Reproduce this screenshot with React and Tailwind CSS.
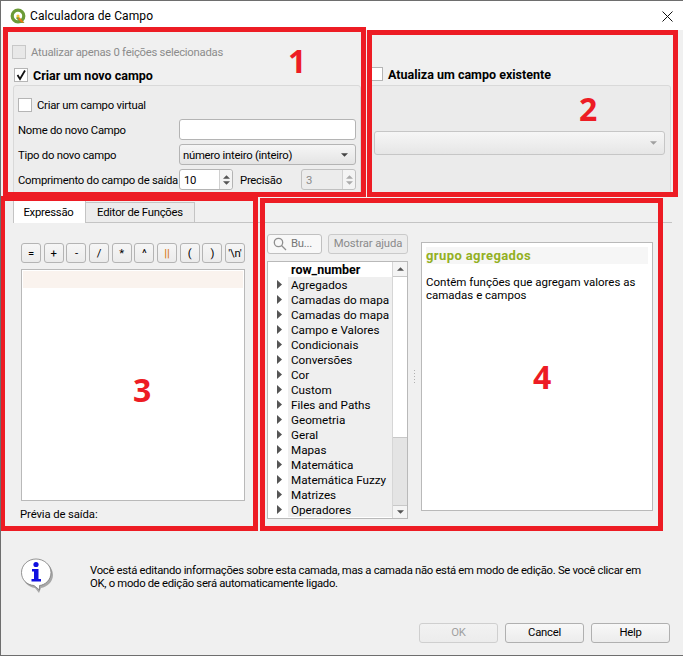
const font = { fontFamily: 'Roboto, sans-serif' };

const operators = ['=', '+', '-', '/', '*', '^', '||', '(', ')', "'\\n'"];
const groups = [
  'Agregados',
  'Camadas do mapa',
  'Camadas do mapa',
  'Campo e Valores',
  'Condicionais',
  'Conversões',
  'Cor',
  'Custom',
  'Files and Paths',
  'Geometria',
  'Geral',
  'Mapas',
  'Matemática',
  'Matemática Fuzzy',
  'Matrizes',
  'Operadores',
];

const Check = ({ checked, disabled, className = '' }) => (
  <div
    className={`w-[14px] h-[14px] shrink-0 border flex items-center justify-center ${
      disabled ? 'border-[#c8c8c8] bg-[#e8e8e8]' : 'border-[#b5b5b5] bg-white'
    } ${className}`}
  >
    {checked && (
      <svg width="12" height="12" viewBox="0 0 12 12">
        <path d="M2.5 6 L5 10 L10 1.5" fill="none" stroke="#111" strokeWidth="1.8" />
      </svg>
    )}
  </div>
);

const Arrow = ({ up, color = '#444', w = 7, h = 4 }) => (
  <svg width={w} height={h} viewBox="0 0 8 4">
    <path d={up ? 'M4 0 L8 4 L0 4 Z' : 'M0 0 L8 0 L4 4 Z'} fill={color} />
  </svg>
);

const Select = ({ children, disabled }) => (
  <div
    className={`flex items-center justify-between rounded-[3px] border border-[#b4b4b4] bg-gradient-to-b pl-[3px] pr-[7px] ${
      disabled ? 'from-[#f6f6f6] to-[#e6e6e6] h-[24px] border-[#c6c6c6]' : 'from-[#f6f6f6] to-[#e4e4e4] h-[21px]'
    }`}
  >
    <span className="pt-[3px]">{children}</span>
    <Arrow color={disabled ? '#a0a0a0' : '#444'} />
  </div>
);

const Spin = ({ value, disabled, className = '' }) => (
  <div
    className={`flex h-[21px] rounded-[3px] border ${
      disabled ? 'border-[#c0c0c0] bg-[#ececec] text-[#8a8a8a]' : 'border-[#b4b4b4] bg-white'
    } ${className}`}
  >
    <span className="flex-1 pl-[4px] leading-[22px]">{value}</span>
    <div className="w-[13px] border-l border-[#d0d0d0] flex flex-col items-center justify-center gap-[2px] bg-[#f4f4f4] rounded-r-[3px]">
      <Arrow up color={disabled ? '#ababab' : '#555'} />
      <Arrow color={disabled ? '#ababab' : '#555'} />
    </div>
  </div>
);

const Btn = ({ children, disabled }) => (
  <button
    className={`w-[79px] h-[20px] rounded-[3px] border bg-gradient-to-b text-center leading-[18px] ${
      disabled
        ? 'border-[#cfcfcf] from-[#f2f2f2] to-[#ececec] text-[#a0a0a0]'
        : 'border-[#b0b0b0] from-[#f8f8f8] to-[#ececec] text-black'
    }`}
  >
    {children}
  </button>
);

const RedBox = ({ className }) => (
  <div className={`absolute border-[5px] border-[#ed1c24] pointer-events-none ${className}`} />
);

const RedNum = ({ children, className }) => (
  <div
    className={`absolute text-[#ed1c24] text-[32px] font-bold leading-none ${className}`}
    style={{ fontFamily: '"Open Sans", sans-serif' }}
  >
    {children}
  </div>
);

const QgisLogo = () => (
  <svg width="17" height="17" viewBox="0 0 17 17">
    <circle cx="8" cy="8" r="5.8" fill="none" stroke="#6b9b37" strokeWidth="3.2" />
    <path d="M8 8 L14.5 15 L10.5 15 L6 10 Z" fill="#6b9b37" />
    <path d="M9.5 9.5 L14 14.5 L11.5 14.5 L8 11 Z" fill="#ee7913" />
    <circle cx="8" cy="8" r="1.6" fill="#f0c330" />
  </svg>
);

const InfoIcon = () => (
  <svg width="33" height="36" viewBox="0 0 33 36">
    <path
      d="M17 3 C25 3 32 9 32 17 C32 24 26 29 20 30 L18 35 L14 30 C7 29 2 24 2 17 C2 9 9 3 17 3 Z"
      fill="#a8a8a8"
    />
    <path
      d="M15 1 C23 1 30 7 30 14.5 C30 22 24 27 18.500 27.500 L18.500 32 L13 27.500 C6 27 0.500 22 0.500 14.500 C0.500 7 7 1 15 1 Z"
      fill="white"
      stroke="#7a7a7a"
      strokeWidth="0.8"
    />
    <circle cx="15" cy="6.500" r="2.600" fill="#1010e0" />
    <path d="M11 11 H17.500 V21 H20 V23.500 H10.500 V21 H13 V13.500 H11 Z" fill="#1010e0" />
  </svg>
);

export default function App() {
  return (
    <div
      className="relative w-[683px] h-[656px] flex flex-col bg-[#f0f0f0] border-t border-l border-b border-[#6e6e6e] text-[11.3px] tracking-[-0.25px] text-black overflow-hidden whitespace-nowrap"
      style={font}
    >
      {/* title bar */}
      <div className="h-[29px] shrink-0 bg-white flex items-center pl-[9px] pr-[10px] pt-px">
        <QgisLogo />
        <span className="ml-[3px] text-[12px] tracking-[0.1px]">Calculadora de Campo</span>
        <svg className="ml-auto" width="11" height="11" viewBox="0 0 11 11">
          <path d="M0.5 0.5 L10.5 10.500 M10.500 0.500 L0.500 10.500" stroke="#111" strokeWidth="1" />
        </svg>
      </div>

      {/* field options */}
      <div className="h-[171px] shrink-0 flex pl-[11px]">
        <div className="w-[349px]">
          <div className="flex items-center h-[14px] mt-[15px] text-[#8c8c8c]">
            <Check disabled />
            <span className="ml-[5px] pt-[3px]">Atualizar apenas 0 feições selecionadas</span>
          </div>
          <div className="flex items-center h-[14px] mt-[9px] ml-[2px]">
            <Check checked />
            <span className="ml-[5px] pt-[3px] font-bold text-[12.5px] tracking-normal">Criar um novo campo</span>
          </div>
          <div className="ml-px mt-[3px] h-[110px] rounded-[3px] border border-[#d9d9d9] bg-[#ededed] pl-[4px] pt-[12px]">
            <div className="flex items-center h-[14px]">
              <Check />
              <span className="ml-[5px] pt-[3px]">Criar um campo virtual</span>
            </div>
            <div className="mt-[7px] grid grid-cols-[161px_177px] items-center gap-y-[4px]">
              <span className="pt-[3px]">Nome do novo Campo</span>
              <div className="h-[21px] rounded-[3px] border border-[#b4b4b4] bg-white" />
              <span className="pt-[3px]">Tipo do novo campo</span>
              <Select>número inteiro (inteiro)</Select>
              <span className="pt-[4px]">Comprimento do campo de saída</span>
              <div className="flex items-center">
                <Spin value="10" className="w-[54px]" />
                <span className="ml-[7px] pt-[3px]">Precisão</span>
                <Spin value="3" disabled className="w-[55px] ml-auto" />
              </div>
            </div>
          </div>
        </div>
        <div className="w-[302px] ml-[8px]">
          <div className="flex items-center h-[14px] mt-[37px]">
            <Check />
            <span className="ml-[5px] pt-[3px] font-bold text-[12.5px] tracking-normal">Atualiza um campo existente</span>
          </div>
          <div className="ml-px mt-[4px] h-[110px] rounded-[3px] border border-[#d9d9d9] bg-[#ebebeb] px-[3px] pt-[45px] pr-[5px]">
            <Select disabled />
          </div>
        </div>
      </div>

      {/* tabs */}
      <div className="h-[22px] shrink-0 ml-[12px] mr-[11px] flex items-end border-b border-[#c4c4c4]">
        <div className="w-[73px] h-[23px] -mb-px bg-white border-l border-r border-[#c4c4c4] flex items-center justify-center pt-[3px] pr-[2px]">
          Expressão
        </div>
        <div className="w-[109px] h-[20px] border-t border-r border-[#c4c4c4] bg-[#ececec] flex items-center justify-center pt-[2px]">
          Editor de Funções
        </div>
      </div>

      {/* expression builder */}
      <div className="h-[307px] shrink-0 flex pl-[20px]">
        <div className="w-[224px] pt-[20px]">
          <div className="flex justify-between">
            {operators.map((op, i) => (
              <button
                key={i}
                className={`w-[20px] h-[20px] rounded-[3px] border border-[#b4b4b4] bg-gradient-to-b from-[#f6f6f6] to-[#ebebeb] text-center leading-[17px] ${
                  op === '||' ? 'text-[#d97a1e] font-bold' : 'text-black'
                }`}
              >
                {op}
              </button>
            ))}
          </div>
          <div className="mt-[6px] h-[232px] border border-[#b9b9b9] bg-white pt-px px-px">
            <div className="h-[17px] bg-[#faf3ee]" />
          </div>
          <div className="mt-[6px] -ml-px leading-[16px] tracking-[-0.1px]">Prévia de saída:</div>
        </div>

        <div className="w-[141px] ml-[22px] pt-[11px]">
          <div className="flex justify-between">
            <div className="w-[55px] h-[20px] rounded-[3px] border border-[#c0c0c0] bg-[#f8f8f8] flex items-center pl-[5px] text-[#777]">
              <svg width="14" height="14" viewBox="0 0 14 14" fill="none" stroke="#8f8f8f" strokeWidth="1.300">
                <circle cx="5.500" cy="5.500" r="4.200" />
                <path d="M8.500 8.500 L13 13" />
              </svg>
              <span className="ml-[4px]">Bu...</span>
            </div>
            <div className="w-[80px] h-[20px] rounded-[3px] border border-[#cacaca] bg-[#ececec] text-[#8a8a8a] tracking-[-0.1px] flex items-center justify-center">
              Mostrar ajuda
            </div>
          </div>
          <div className="mt-[7px] h-[258px] border border-[#b9b9b9] bg-white flex text-[11.7px] tracking-normal">
            <div className="w-[125px] overflow-hidden">
              <div className="h-[15px] pl-[23px] font-bold text-[12.5px] leading-[15px]">row_number</div>
              {groups.map((g, i) => (
                <div key={i} className="h-[15px] flex">
                  <div className="w-[20px] shrink-0 flex items-center justify-center pl-[2px]">
                    <svg width="5" height="9" viewBox="0 0 5 9">
                      <path d="M0 0 L5 4.500 L0 9 Z" fill="#555" />
                    </svg>
                  </div>
                  <div className="flex-1 bg-[#efefef] pl-[3px] leading-[17px]">{g}</div>
                </div>
              ))}
            </div>
            <div className="w-[15px] border-l border-[#d6d6d6] flex flex-col">
              <div className="h-[15px] flex items-center justify-center border-b border-[#c8c8c8] bg-[#f4f4f4]">
                <Arrow up color="#555" />
              </div>
              <div className="h-[161px] bg-white border-b border-[#c8c8c8]" />
              <div className="flex-1 bg-[#e4e4e4]" />
              <div className="h-[13px] flex items-center justify-center border-t border-[#c8c8c8] bg-[#f4f4f4]">
                <Arrow color="#555" />
              </div>
            </div>
          </div>
        </div>

        <div className="w-[13px] pt-[147px] flex flex-col items-center gap-[2px]">
          {[0, 1, 2, 3, 4].map((d) => (
            <div key={d} className="w-px h-px bg-[#b0b0b0]" />
          ))}
        </div>

        <div className="w-[232px] mt-[19px] h-[269px] border border-[#b9b9b9] bg-white px-[4px] pt-[4px]">
          <div className="h-[17px] bg-[#f6f6f6] font-bold text-[13px] tracking-[0.4px] leading-[17px] text-[#93b023]">grupo agregados</div>
          <div className="mt-[12px] leading-[13px] text-[11.5px] tracking-normal">
            Contêm funções que agregam valores as
            <br />
            camadas e campos
          </div>
        </div>
      </div>

      {/* edit mode warning */}
      <div className="flex pl-[20px] mt-[28px] h-[36px]">
        <InfoIcon />
        <p className="ml-[36px] pt-[6px] leading-[13px] tracking-[-0.3px]">
          Você está editando informações sobre esta camada, mas a camada não está em modo de edição. Se você clicar em
          <br />
          OK, o modo de edição será automaticamente ligado.
        </p>
      </div>

      {/* dialog buttons */}
      <div className="mt-auto mb-[12px] pr-[13px] flex justify-end gap-[7px]">
        <Btn disabled>OK</Btn>
        <Btn>Cancel</Btn>
        <Btn>Help</Btn>
      </div>

      {/* red annotations */}
      <RedBox className="left-[2px] top-[26px] w-[363px] h-[170px]" />
      <RedBox className="left-[366px] top-[29px] w-[311px] h-[167px]" />
      <RedBox className="left-[-1px] top-[195px] w-[258px] h-[335px]" />
      <RedBox className="left-[259px] top-[197px] w-[403px] h-[333px]" />
      <RedNum className="left-[287px] top-[44px]">1</RedNum>
      <RedNum className="left-[578px] top-[92px]">2</RedNum>
      <RedNum className="left-[132px] top-[373px]">3</RedNum>
      <RedNum className="left-[532px] top-[360px]">4</RedNum>
    </div>
  );
}
